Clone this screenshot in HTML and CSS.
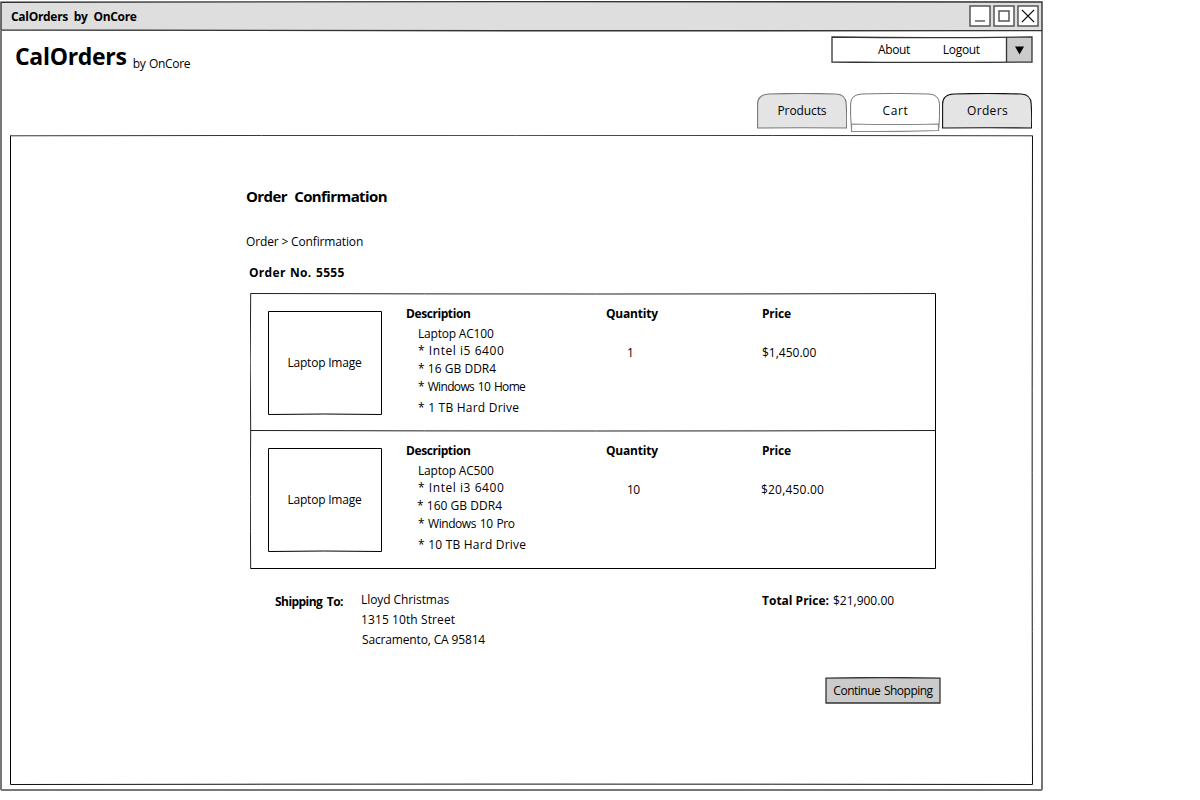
FILE: index.html
```
<!DOCTYPE html>
<html lang="en">
<head>
<meta charset="utf-8">
<title>CalOrders by OnCore</title>
<link rel="stylesheet" href="styles.css">
</head>
<body>
<div class="window">
  <svg class="sketch" viewBox="0 0 1044 792">
    <path d="M1 31V790" stroke="#777" stroke-width="2"/>
    <path d="M1042 31V790" stroke="#777" stroke-width="2"/>
    <path d="M1 790H1042" stroke="#777" stroke-width="2"/>
  </svg>
  <header class="titlebar">
    <svg class="sketch" viewBox="0 0 1044 32">
      <path d="M1 2.2L500 1.6L1042 2L1042 30.6Q780 31.6 520 30.8Q260 30 1 30Z" fill="#dedede" stroke="#333" stroke-width="1.4"/>
    </svg>
    <span class="titlebar-text">CalOrders by OnCore</span>
    <span class="controls">
      <svg class="control" viewBox="0 0 22 22"><path d="M1 1H21V21H1Z" fill="#fff" stroke="#555" stroke-width="1.5"/><path d="M6 16H16" stroke="#555" stroke-width="1.4"/></svg>
      <svg class="control" viewBox="0 0 22 22"><path d="M1 1H21V21H1Z" fill="#fff" stroke="#555" stroke-width="1.5"/><path d="M6 6H16V16H6Z" fill="none" stroke="#555" stroke-width="1.5"/></svg>
      <svg class="control" viewBox="0 0 22 22"><path d="M1 1H21V21H1Z" fill="#fff" stroke="#555" stroke-width="1.5"/><path d="M5 5L17 17M17 5L5 17" stroke="#111" stroke-width="1.1"/></svg>
    </span>
  </header>

  <div class="masthead">
    <div class="brand"><h1 class="logo">CalOrders</h1><span class="byline">by OnCore</span></div>
    <nav class="menu">
      <svg class="sketch" viewBox="0 0 202 27">
        <path d="M175.5 1H201V26H175.5Z" fill="#cbcbcb"/>
        <path d="M1 1Q100 2.4 201 1V26Q100 27 1 26Z" fill="none" stroke="#333" stroke-width="1.3"/>
        <path d="M175.5 1V26" stroke="#333" stroke-width="1.3"/>
        <path d="M184 10.5H193L188.5 18.5Z" fill="#000"/>
      </svg>
      <a class="about">About</a><a class="logout">Logout</a>
    </nav>
  </div>

  <nav class="tabs">
    <a class="tab products">
      <svg class="sketch" viewBox="0 0 90 39"><path d="M.6 35V11Q.6 1.5 12 1Q45 -.2 79 1Q89 1.5 89.2 11Q90 24 89.5 35Q45 34.5 .6 35Z" fill="#e4e4e4" stroke="#777" stroke-width="1.1"/></svg>
      <span>Products</span></a>
    <a class="tab cart">
      <svg class="sketch" viewBox="0 0 90 39"><path d="M1.5 35Q.2 24 .6 11Q.6 1.5 12 1Q45 -.2 79 1Q89 1.5 89.5 11Q89.8 24 88.8 35" fill="#fff" stroke="#777" stroke-width="1"/><path d="M1.5 31Q45 32 88.5 31V37.5Q45 39 1.5 38.5Z" fill="#fff" stroke="#888" stroke-width="1.2"/></svg>
      <span>Cart</span></a>
    <a class="tab orders">
      <svg class="sketch" viewBox="0 0 90 39"><path d="M.6 35V11Q.6 1.5 12 1Q45 -.2 79 1Q89 1.5 89.2 11Q90 24 89.5 35Q45 34.5 .6 35Z" fill="#e4e4e4" stroke="#111" stroke-width="1.1"/></svg>
      <span>Orders</span></a>
  </nav>

  <main class="panel">
    <svg class="sketch" viewBox="0 0 1023 651">
      <path d="M.5 .8Q500 -.1 1022 .8" stroke="#333" fill="none"/>
      <path d="M.5 .5V649.5" stroke="#000"/>
      <path d="M1022.5 .5Q1021.8 350 1022.5 649.5" stroke="#111" fill="none"/>
      <path d="M.5 649.5Q500 648.7 1022.5 649.5" stroke="#111" fill="none"/>
    </svg>
    <h2 class="heading">Order Confirmation</h2>
    <div class="crumbs">Order &gt; Confirmation</div>
    <h3 class="order-no">Order No. 5555</h3>

    <div class="items">
      <svg class="sketch" viewBox="0 0 686 276">
        <path d="M.5 .5Q350 1.5 685.5 .5" stroke="#222" fill="none"/>
        <path d="M.7 .5Q-.3 70 .7 138Q0 200 .7 275.5" stroke="#222" fill="none"/>
        <path d="M685.5 .5V275.5H.5" stroke="#000" fill="none"/>
        <path d="M.5 137.5Q350 138.5 685.5 137.5" stroke="#222" fill="none"/>
      </svg>
      <section class="item">
        <div class="thumb">
          <svg class="sketch" viewBox="0 0 114 104"><path d="M.5 103.5V.5H113.5V103.5Q56 102.5 .5 103.5Z" fill="none" stroke="#000"/></svg>
          <span class="thumb-text">Laptop Image</span>
        </div>
        <div class="desc">
          <h4 class="description">Description</h4>
          <p class="name">Laptop AC100</p>
          <p class="cpu">* Intel i5 6400</p>
          <p class="ram">* 16 GB DDR4</p>
          <p class="os-home">* Windows 10 Home</p>
          <p class="disk">* 1 TB Hard Drive</p>
        </div>
        <div class="qty"><h4>Quantity</h4><p>1</p></div>
        <div class="price"><h4>Price</h4><p>$1,450.00</p></div>
      </section>
      <section class="item">
        <div class="thumb">
          <svg class="sketch" viewBox="0 0 114 104"><path d="M.5 103.5V.5H113.5V103.5Q56 102.5 .5 103.5Z" fill="none" stroke="#000"/></svg>
          <span class="thumb-text">Laptop Image</span>
        </div>
        <div class="desc">
          <h4 class="description">Description</h4>
          <p class="name">Laptop AC500</p>
          <p class="cpu">* Intel i3 6400</p>
          <p class="ram ram-wide">* 160 GB DDR4</p>
          <p class="os-pro">* Windows 10 Pro</p>
          <p class="disk">* 10 TB Hard Drive</p>
        </div>
        <div class="qty"><h4>Quantity</h4><p>10</p></div>
        <div class="price price-wide"><h4>Price</h4><p>$20,450.00</p></div>
      </section>
    </div>

    <div class="summary">
      <h4 class="ship-label">Shipping To:</h4>
      <address class="address">
        <span class="person">Lloyd Christmas</span>
        <span class="street">1315 10th Street</span>
        <span class="city">Sacramento, CA 95814</span>
      </address>
      <div class="total"><b>Total Price:</b><span>$21,900.00</span></div>
    </div>

    <button class="continue">
      <svg class="sketch" viewBox="0 0 116 27"><path d="M1 1.2Q58 -.1 115 1.2V26H1Z" fill="#cbcbcb" stroke="#333" stroke-width="1.3"/></svg>
      <span>Continue Shopping</span>
    </button>
  </main>
</div>
</body>
</html>
```
FILE: styles.css
```
* { box-sizing: border-box; }

body {
  margin: 0;
  background: #fff;
  color: #000;
  font: 12px/18px "Open Sans", sans-serif;
  white-space: nowrap;
}

h1, h2, h3, h4, p { margin: 0; font-size: 12px; line-height: 18px; }
h1, h2, h3, h4, b { font-weight: 700; }

/* Hand-drawn outline laid behind a box's content */
.sketch {
  position: absolute;
  inset: 0;
  width: 100%;
  height: 100%;
  z-index: -1;
}

.window, .titlebar, .menu, .tab, .panel, .items, .thumb, .continue {
  position: relative;
  isolation: isolate;
}

.window {
  width: 1044px;
  height: 792px;
  display: flex;
  flex-direction: column;
}

.titlebar {
  height: 32px;
  display: flex;
  justify-content: space-between;
  padding: 5px 5px 0 11px;
}
.titlebar-text {
  padding-top: 3px;
  font-weight: 700;
  letter-spacing: -.3px;
  word-spacing: 3px;
}
.controls { display: flex; gap: 2px; }
.control { width: 22px; height: 22px; }

.masthead {
  height: 61px;
  display: flex;
  justify-content: space-between;
  padding: 4px 11px 0 15px;
}
.brand { display: flex; gap: 6px; }
.logo { font-size: 23px; line-height: 32px; padding-top: 4px; letter-spacing: -.3px; }
.byline { padding-top: 19px; letter-spacing: -.35px; word-spacing: 1px; }
.menu {
  width: 202px;
  height: 27px;
  display: flex;
  gap: 33px;
  padding: 5px 0 0 47px;
}
.about { letter-spacing: -.4px; }
.logout { letter-spacing: -.3px; }

.tabs {
  height: 42px;
  display: flex;
  gap: 2.5px;
  justify-content: flex-end;
  padding-right: 12px;
}
.tab { width: 90px; height: 39px; text-align: center; padding-top: 9px; }
.products { letter-spacing: -.1px; }
.cart { letter-spacing: .6px; padding-left: 2px; }
.orders { letter-spacing: .34px; padding-left: 1px; }

.panel {
  width: 1023px;
  height: 651px;
  margin-left: 10px;
  padding: 50px 0 0 236px;
}
.heading { font-size: 15px; line-height: 22px; letter-spacing: -.6px; word-spacing: 4px; }
.crumbs { margin-top: 26px; letter-spacing: -.15px; }
.order-no { margin: 13px 0 0 3px; letter-spacing: .3px; word-spacing: 1px; }

.items { width: 686px; height: 276px; margin: 11px 0 0 4px; }
.item {
  height: 137px;
  display: grid;
  grid-template-columns: 138px 200px 156px 1fr;
  padding: 12px 0 0 18px;
}
.thumb {
  width: 114px;
  height: 104px;
  margin-top: 6px;
  display: flex;
  align-items: center;
  justify-content: center;
}
.thumb-text { letter-spacing: -.2px; padding-right: 1px; }
.desc p { padding-left: 12px; }
.description { letter-spacing: -.42px; }
.qty h4, .price h4 { letter-spacing: -.2px; }
.name { margin-top: 2px; letter-spacing: -.2px; }
.cpu { margin-top: -1px; letter-spacing: .55px; }
.ram { letter-spacing: .03px; }
.desc .ram-wide { padding-left: 11px; }
.os-home { letter-spacing: -.65px; word-spacing: 1.2px; }
.os-pro { letter-spacing: -.45px; word-spacing: 1.2px; }
.disk { margin-top: 3px; letter-spacing: .22px; }
.qty p { margin-top: 21px; padding-left: 21px; letter-spacing: -.5px; }
.price p { margin-top: 21px; }
.price-wide p { margin-left: -1px; letter-spacing: .2px; }

.summary {
  display: grid;
  grid-template-columns: 86px 401px 1fr;
  padding: 22px 0 0 29px;
}
.ship-label { padding-top: 2px; letter-spacing: -.55px; word-spacing: 2px; }
.address {
  display: flex;
  flex-direction: column;
  gap: 2px;
  font-style: normal;
}
.person { letter-spacing: -.08px; }
.street { letter-spacing: .1px; }
.city { padding-left: 1px; letter-spacing: -.15px; }
.total { display: flex; gap: 4px; padding-top: 1px; }

.continue {
  display: block;
  width: 116px;
  height: 27px;
  margin: 28px 0 0 579px;
  padding: 0;
  border: 0;
  background: none;
  color: #000;
  font: 12px/18px "Open Sans", sans-serif;
  letter-spacing: -.5px;
  word-spacing: 1px;
}
```
